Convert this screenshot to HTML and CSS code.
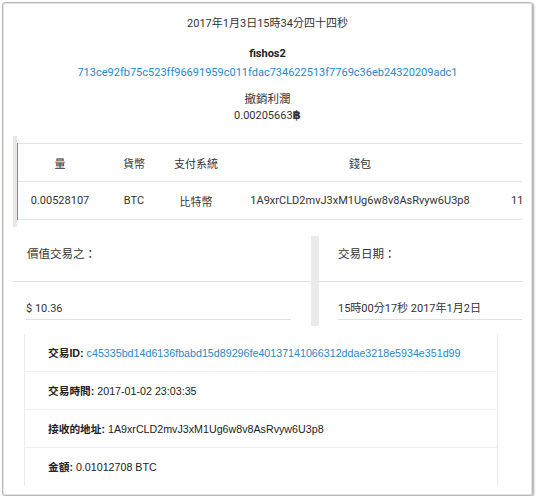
FILE: index.html
```html
<!DOCTYPE html>
<html lang="zh-Hant">
<head>
<meta charset="utf-8">
<title>交易</title>
<link rel="stylesheet" href="styles.css">
</head>
<body>
<div class="frame">
  <header class="summary">
    <div class="stamp">2017年1月3日15時34分四十四秒</div>
    <div class="user">fishos2</div>
    <a class="hash" href="#">713ce92fb75c523ff96691959c011fdac734622513f7769c36eb24320209adc1</a>
    <div class="label">撤銷利潤</div>
    <div class="amount">0.00205663<span class="btc">฿</span></div>
  </header>

  <section class="table-wrap">
    <div class="table">
      <div class="row head">
        <div class="c c1">量</div>
        <div class="c c2">貨幣</div>
        <div class="c c3">支付系統</div>
        <div class="c c4">錢包</div>
        <div class="c c5"></div>
      </div>
      <div class="row">
        <div class="c c1">0.00528107</div>
        <div class="c c2">BTC</div>
        <div class="c c3">比特幣</div>
        <div class="c c4">1A9xrCLD2mvJ3xM1Ug6w8v8AsRvyw6U3p8</div>
        <div class="c c5">11</div>
      </div>
    </div>
  </section>

  <section class="values">
    <div class="vcol left">
      <div class="vhead">價值交易之：</div>
      <div class="vval">$ 10.36</div>
    </div>
    <div class="vbar"></div>
    <div class="vcol right">
      <div class="vhead">交易日期：</div>
      <div class="vval">15時00分17秒 2017年1月2日</div>
    </div>
  </section>

  <section class="card">
    <div class="item"><b>交易ID:</b> <a href="#">c45335bd14d6136fbabd15d89296fe40137141066312ddae3218e5934e351d99</a></div>
    <div class="item"><b>交易時間:</b> 2017-01-02 23:03:35</div>
    <div class="item"><b>接收的地址:</b> 1A9xrCLD2mvJ3xM1Ug6w8v8AsRvyw6U3p8</div>
    <div class="item"><b>金額:</b> 0.01012708 BTC</div>
  </section>
</div>
</body>
</html>
```

FILE: styles.css
```css
* { box-sizing: border-box; }

html, body {
  margin: 0;
  padding: 0;
  background: #ffffff;
}

body {
  font-family: Roboto, "Noto Sans CJK TC", sans-serif;
  color: #333333;
}

.frame {
  margin: 2px 0 0 2px;
  width: 531px;
  height: 494px;
  border: 1px solid #b9b9b9;
  border-radius: 3px;
  box-shadow: 1px 1px 2px rgba(0, 0, 0, 0.35), inset 0 0 0 1px #e2e2e2;
  overflow: hidden;
  padding: 0 1px;
}

/* summary */
.summary {
  padding-top: 13px;
  text-align: center;
  font-size: 11px;
  line-height: 16px;
}

.stamp { color: #333; }

.user {
  margin-top: 14px;
  font-weight: 700;
  color: #222;
}

.hash {
  display: block;
  margin-top: 3px;
  color: #1f8ac8;
  text-decoration: none;
}

.label {
  margin-top: 10px;
  font-size: 11.5px;
}

.amount {
  margin-top: 0;
}

.btc {
  font-family: "DejaVu Sans", sans-serif;
  font-weight: 700;
  font-size: 12px;
}

/* table */
.table-wrap {
  margin: 12px 9px 0 9px;
  border-left: 4px solid #e9e6e6;
  padding: 7px 0 7px 0;
  overflow: hidden;
}

.table {
  border-left: 1px solid #4a9ade;
  font-size: 11px;
  color: #333;
}

.row {
  display: flex;
  height: 38px;
  align-items: center;
  border-bottom: 1px solid #e3e3e3;
  white-space: nowrap;
}

.row.head {
  border-top: 1px solid #e3e3e3;
  height: 39px;
}

.c { text-align: center; flex: none; }
.c1 { width: 84px; }
.c2 { width: 64px; }
.c3 { width: 60px; }
.c4 { width: 268px; }
.c5 { width: 60px; text-align: left; padding-left: 17px; }

/* values */
.values {
  display: flex;
  align-items: flex-start;
  margin: 9px 9px 0 9px;
  height: 90px;
}

.vcol { flex: none; }
.vcol.left { width: 298px; }
.vcol.right { flex: 1; }

.vbar {
  flex: none;
  width: 8px;
  align-self: stretch;
  background: #ebebeb;
}

.vhead {
  font-size: 11.5px;
  line-height: 16px;
  padding: 10px 0 19px 14px;
  border-bottom: 1px solid #e0e0e0;
}

.right .vhead { padding-left: 19px; }

.vval {
  font-size: 11px;
  line-height: 16px;
  padding: 19px 0 2px 0;
  margin: 0 20px 0 13px;
  border-bottom: 1px solid #e0e0e0;
}

.right .vval { margin: 0 0 0 19px; }

/* card */
.card {
  margin: 8px 0 0 20px;
  width: 474px;
  border-left: 1px solid #ececec;
  border-right: 1px solid #ececec;
  font-family: "Liberation Sans", Arial, "Noto Sans CJK TC", sans-serif;
  font-size: 10.7px;
  color: #222;
}

.item {
  height: 38px;
  line-height: 38px;
  padding-left: 23px;
  border-bottom: 1px solid #eeeeee;
  white-space: nowrap;
}

.item:last-child { border-bottom: none; }

.item b { font-weight: 700; }

.item a {
  color: #2b87c5;
  text-decoration: none;
}
```
